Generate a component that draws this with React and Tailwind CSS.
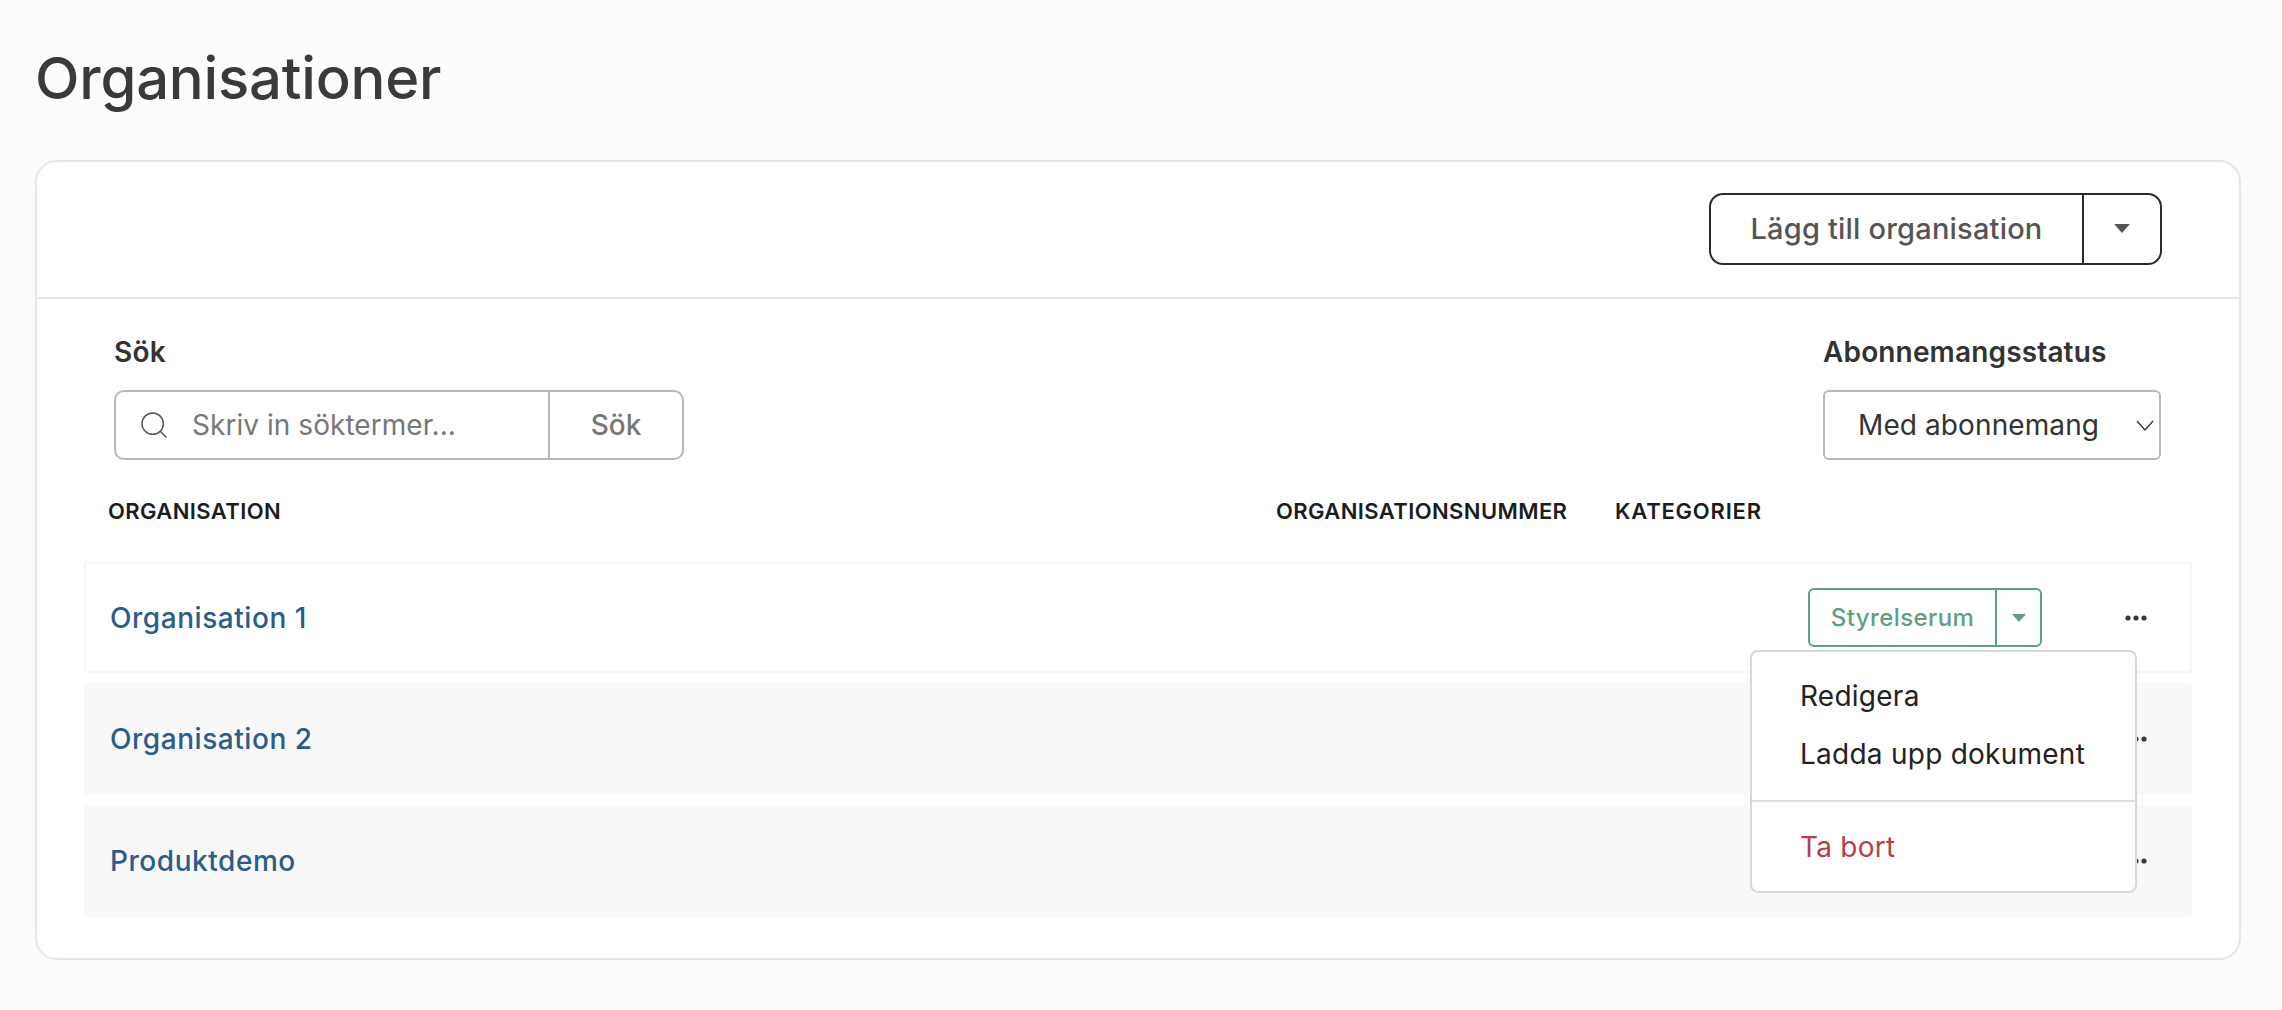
import { Search } from "lucide-react";

const rows = ["Organisation 1", "Organisation 2", "Produktdemo"];

function Caret({ className }) {
  return (
    <svg viewBox="0 0 14 8" className={className} fill="currentColor">
      <path d="M0 0h14L7 8z" />
    </svg>
  );
}

function Dots() {
  return (
    <svg viewBox="0 0 22 6" className="w-[22px] h-[6px]" fill="#3a3a3a">
      <circle cx="3" cy="3" r="2.6" />
      <circle cx="11" cy="3" r="2.6" />
      <circle cx="19" cy="3" r="2.6" />
    </svg>
  );
}

function Row({ name, active }) {
  return (
    <div
      className={
        "flex items-center rounded-[3px] " +
        (active
          ? "h-[111px] pl-[24px] pr-[43px] bg-white border-2 border-[#f7f7f7]"
          : "h-[112px] pl-[26px] pr-[45px] bg-[#f8f8f8]")
      }
    >
      <a className="text-[28px] tracking-[0.55px] font-medium text-[#2b5c8a] flex-1">{name}</a>
      {active && (
        <div className="flex h-[59px] w-[234px] mr-[83px] border-2 border-[#5f9f80] rounded-[6px] text-[#5f9f80]">
          <div className="w-[187px] flex items-center justify-center border-r-2 border-[#5f9f80] text-[24px] tracking-[0.4px] font-medium">
            Styrelserum
          </div>
          <div className="flex-1 flex items-center justify-center">
            <Caret className="w-[14px] h-[8px]" />
          </div>
        </div>
      )}
      <Dots />
    </div>
  );
}

export default function App() {
  return (
    <div className="min-h-[1010px] bg-[#fcfcfc] pt-[42px] pl-[35px] pr-[41px] font-['Inter',sans-serif] text-[#333]">
      <h1 className="text-[58px] leading-[72px] font-medium text-[#3a3a3a] tracking-[-0.2px]">Organisationer</h1>
      <div className="mt-[46px] h-[800px] bg-white border-2 border-[#e6e6e6] rounded-[22px] shadow-[0_0_24px_rgba(0,0,0,0.02)]">
        <div className="h-[137px] border-b-2 border-[#e6e6e6] flex justify-end items-center pr-[77px] pb-[2px]">
          <div className="flex h-[72px] w-[453px] border-2 border-[#2b2b2b] rounded-[14px] text-[#555]">
            <div className="w-[373px] flex items-center justify-center border-r-2 border-[#2b2b2b] text-[29px] tracking-[0.2px] font-medium">
              Lägg till organisation
            </div>
            <div className="flex-1 flex items-center justify-center">
              <Caret className="w-[16px] h-[9px]" />
            </div>
          </div>
        </div>

        <div className="relative px-[47px]">
          <div className="flex justify-between px-[31px] pl-[30px] pt-[36px]">
            <div>
              <label className="block text-[28px] tracking-[0.2px] leading-[34px] font-semibold">Sök</label>
              <div className="mt-[21px] flex h-[70px] w-[570px] border-2 border-[#b8b8b8] rounded-[10px] text-[#777]">
                <div className="w-[434px] flex items-center border-r-2 border-[#b8b8b8] pl-[22px] gap-[22px]">
                  <Search size={32} strokeWidth={1.1} className="text-[#555]" />
                  <span className="text-[28px] tracking-[0.05px]">Skriv in söktermer...</span>
                </div>
                <div className="flex-1 flex items-center justify-center text-[28px] font-medium">Sök</div>
              </div>
            </div>
            <div>
              <label className="block text-[28px] tracking-[0.15px] leading-[34px] font-semibold">Abonnemangsstatus</label>
              <div className="mt-[21px] flex h-[70px] w-[338px] items-center justify-between border-2 border-[#b8b8b8] rounded-[6px] pl-[33px] pr-[5px]">
                <span className="text-[28px] tracking-[0.1px]">Med abonnemang</span>
                <svg viewBox="0 0 18 11" className="w-[18px] h-[11px]" fill="none" stroke="#333" strokeWidth="1.3">
                  <path d="M1 1l8 9 8-9" />
                </svg>
              </div>
            </div>
          </div>

          <div className="flex items-center h-[102px] text-[22px] tracking-[0.4px] font-semibold text-[#1c1c1c] pl-[24px]">
            <span className="w-[1168px]">ORGANISATION</span>
            <span className="w-[339px]">ORGANISATIONSNUMMER</span>
            <span className="tracking-[0.8px]">KATEGORIER</span>
          </div>

          <div className="flex flex-col gap-[10px]">
            {rows.map((name, i) => (
              <Row key={name} name={name} active={i === 0} />
            ))}
          </div>

          <div className="absolute left-[1713px] top-[351px] w-[387px] h-[243px] bg-white border-2 border-[#d8d8d8] rounded-[8px] text-[28px] tracking-[0.25px] text-[#222]">
            <div className="pt-[15px] h-[148px] pl-[48px]">
              <div className="h-[58px] flex items-center">Redigera</div>
              <div className="h-[58px] flex items-center">Ladda upp dokument</div>
            </div>
            <div className="border-t-2 border-[#dedede] h-[91px] pl-[48px] flex items-center text-[#b5404a]">Ta bort</div>
          </div>
        </div>
      </div>
    </div>
  );
}
